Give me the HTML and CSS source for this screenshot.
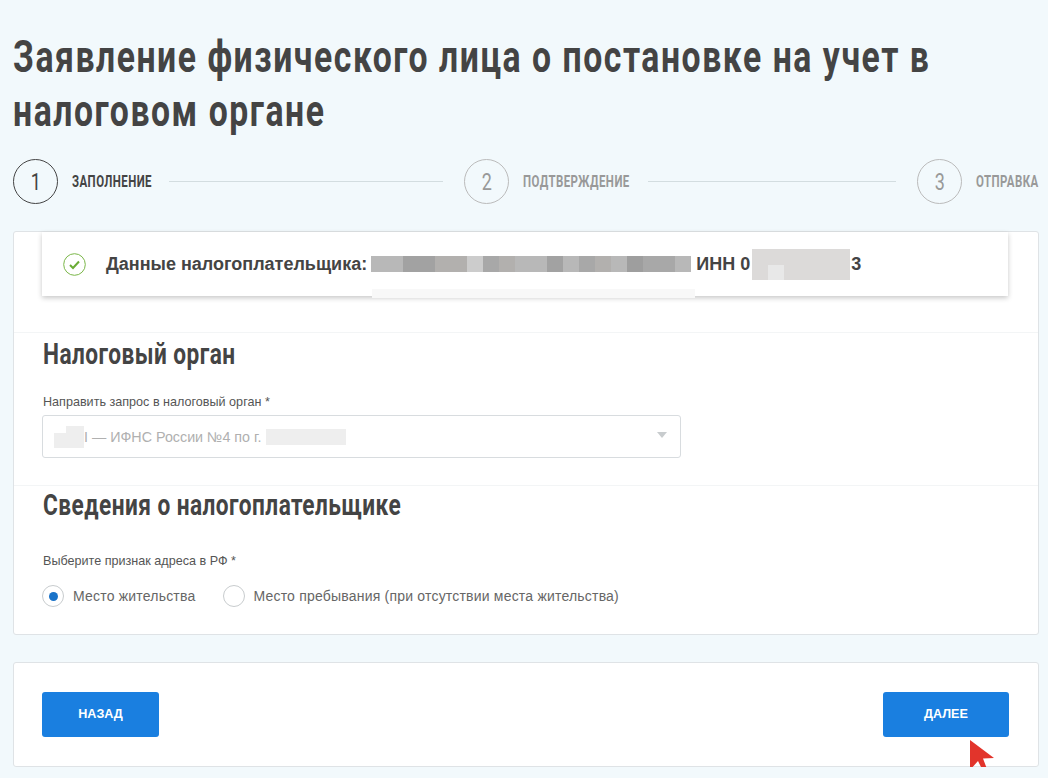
FILE: index.html
```html
<!DOCTYPE html>
<html lang="ru">
<head>
    <meta charset="UTF-8">
    <meta name="viewport" content="width=device-width, initial-scale=1.0">
    <title>Заявление физического лица</title>
    <link rel="stylesheet" href="styles.css">
</head>
<body>
    <h1 class="page-title">Заявление физического лица о постановке на учет в<br>налоговом органе</h1>

    <div class="steps">
        <div class="step step-active step-first">
            <span class="step-num"><span class="step-digit">1</span></span>
            <span class="step-name">Заполнение</span>
        </div>
        <div class="step-line step-line-long"></div>
        <div class="step step-second">
            <span class="step-num"><span class="step-digit">2</span></span>
            <span class="step-name">Подтверждение</span>
        </div>
        <div class="step-line"></div>
        <div class="step step-third">
            <span class="step-num"><span class="step-digit">3</span></span>
            <span class="step-name">Отправка</span>
        </div>
    </div>

    <div class="card form-card">
        <div class="payer">
            <svg class="payer-icon" width="23" height="23" viewBox="0 0 23 23" fill="none">
                <circle cx="11.500" cy="11.500" r="10.800" stroke="#7ab648" stroke-width="1"/>
                <path d="M7 12l3 3 6-6.500" stroke="#6aac35" stroke-width="2"/>
            </svg>
            <span class="payer-text">Данные налогоплательщика:</span>
            <span class="mosaic">
                <i class="c1"></i><i class="c1"></i><i class="c2"></i><i class="c2"></i><i class="c3"></i><i class="c3"></i><i class="c4"></i><i class="c5"></i><i class="c3"></i><i class="c1"></i><i class="c1"></i><i class="c2"></i><i class="c1"></i><i class="c5"></i><i class="c3"></i><i class="c1"></i><i class="c6"></i><i class="c5"></i><i class="c5"></i><i class="c1"></i>
            </span>
            <span class="payer-text">ИНН 0</span>
            <span class="mosaic-inn"></span>
            <span class="payer-text">3</span>
            <span class="payer-smear"></span>
        </div>

        <section class="block block-tax">
            <h2 class="block-title">Налоговый орган</h2>
            <div class="field-label">Направить запрос в налоговый орган *</div>
            <div class="select">
                <span class="blur-code"></span>
                <span class="select-text">I — ИФНС России №4 по г.</span>
                <span class="blur-city"></span>
                <span class="select-arrow"></span>
            </div>
        </section>

        <section class="block block-info">
            <h2 class="block-title">Сведения о налогоплательщике</h2>
            <div class="field-label">Выберите признак адреса в РФ *</div>
            <div class="radios">
                <label class="radio radio-on"><span class="radio-dot"></span>Место жительства</label>
                <label class="radio"><span class="radio-dot"></span>Место пребывания (при отсутствии места жительства)</label>
            </div>
        </section>
    </div>

    <div class="card actions">
        <button type="button" class="btn btn-back">Назад</button>
        <button type="button" class="btn btn-next">Далее</button>
        <svg class="cursor" width="27" height="34" viewBox="0 0 27 34">
            <path d="M1 1L25 19L14 19.500L18 30L14 32L9 22L1 31Z" fill="#e2342b"/>
        </svg>
    </div>
</body>
</html>
```

FILE: styles.css
```css
body {
    margin: 0;
    padding: 0 9px 0 13px;
    background-color: #f2f9fc;
    color: #444;
    font-family: "Liberation Sans", Arial, sans-serif;
    overflow-x: hidden;
}
.page-title {
    margin: 0;
    padding-top: 30px;
    font-family: Roboto, sans-serif;
    font-size: 44px;
    line-height: 54px;
    font-weight: bold;
    letter-spacing: 2px;
    white-space: nowrap;
    color: #444;
    transform: scaleX(0.767);
    transform-origin: left top;
}
.steps {
    display: flex;
    align-items: center;
    margin-top: 21px;
    height: 45px;
}
.step {
    display: flex;
    flex: none;
    align-items: center;
}
.step-first { width: 138px; }
.step-second { width: 166px; }
.step-third { width: 122px; }
.step-num {
    flex: none;
    width: 43px;
    height: 43px;
    border: 1px solid #bbb;
    border-radius: 50%;
    display: flex;
    align-items: center;
    justify-content: center;
    color: #999;
}
.step-digit {
    font-family: Roboto, sans-serif;
    font-size: 24px;
    transform: scaleX(0.75);
}
.step-name {
    flex: none;
    margin-left: 14px;
    font-family: Roboto, sans-serif;
    font-size: 16px;
    font-weight: bold;
    text-transform: uppercase;
    letter-spacing: 0.6px;
    color: #999;
    transform: scaleX(0.715);
    transform-origin: left center;
}
.step-third .step-name {
    margin-left: auto;
    transform-origin: right center;
}
.step-third .step-num {
    margin-right: -30px;
}
.step-active .step-num {
    border-color: #444;
    color: #444;
}
.step-active .step-name {
    color: #444;
}
.step-line {
    flex: 1;
    height: 1px;
    background-color: #d3dde0;
    margin: 0 21px 0 18px;
}
.step-line-long {
    flex: none;
    width: 274px;
}
.card {
    background-color: #fff;
    border: 1px solid #dfe3e6;
    border-radius: 3px;
    position: relative;
}
.form-card {
    margin-top: 27px;
    height: 402px;
}
.payer {
    position: relative;
    display: flex;
    align-items: center;
    height: 64px;
    margin: 0 30px 0 28px;
    padding-left: 21px;
    box-shadow: 0 2px 5px rgba(0, 0, 0, 0.22);
    background-color: #fff;
}
.payer-icon {
    margin-right: 20px;
}
.payer-text {
    font-size: 18px;
    font-weight: bold;
    color: #444;
    white-space: nowrap;
}
.mosaic {
    display: flex;
    margin-left: 4px;
    margin-right: 5px;
}
.mosaic i {
    display: block;
    width: 16px;
    height: 16px;
}
.c1 { background-color: #b8b8b8; }
.c2 { background-color: #a2a2a2; }
.c3 { background-color: #b2b0ae; }
.c4 { background-color: #cccccc; }
.c5 { background-color: #a8a8a8; }
.c6 { background-color: #9e9e9e; }
.mosaic-inn {
    flex: none;
    width: 98px;
    height: 31px;
    margin-left: 2px;
    margin-right: 1px;
    background: linear-gradient(#e8e8e8, #e8e8e8) 16px 16px / 16px 15px no-repeat #dcdad9;
}
.payer-smear {
    position: absolute;
    left: 330px;
    bottom: -2px;
    width: 323px;
    height: 9px;
    background-color: #f8f8f8;
}
.block {
    border-top: 1px solid #f3f5f6;
    padding: 0 28px;
}
.block-tax {
    margin-top: 36px;
    height: 152px;
}
.block-title {
    margin: 0 0 0 1px;
    font-family: Roboto, sans-serif;
    font-size: 30px;
    line-height: 42px;
    font-weight: bold;
    letter-spacing: 0.6px;
    white-space: nowrap;
    color: #444;
    transform: scaleX(0.755);
    transform-origin: left center;
}
.field-label {
    margin: 19px 0 0 1px;
    font-size: 12.600px;
    line-height: 16px;
    color: #555;
}
.select {
    display: flex;
    align-items: center;
    box-sizing: border-box;
    width: 639px;
    height: 43px;
    margin-top: 5px;
    padding-left: 11px;
    border: 1px solid #d8dcdf;
    border-radius: 3px;
    font-size: 14.300px;
    color: #b0b0b0;
    position: relative;
}
.blur-code {
    display: block;
    width: 30px;
    height: 22px;
    background: linear-gradient(#fff, #fff) 0 0 / 12px 7px no-repeat #eeeeee;
}
.blur-city {
    display: block;
    width: 80px;
    height: 16px;
    margin-left: 5px;
    background-color: #eeeeee;
}
.select-arrow {
    position: absolute;
    right: 13px;
    top: 16px;
    border: 5px solid transparent;
    border-top: 6px solid #c8ccce;
    border-bottom: 0;
}
.block-info .block-title {
    margin-top: -2px;
}
.block-info .field-label {
    margin-top: 27px;
}
.radios {
    display: flex;
    margin-top: 16px;
}
.radio {
    display: flex;
    align-items: center;
    font-size: 14px;
    color: #666;
    letter-spacing: 0.2px;
    margin-right: 28px;
}
.radio-dot {
    box-sizing: border-box;
    width: 22px;
    height: 22px;
    border: 1px solid #c8ccce;
    border-radius: 50%;
    margin-right: 8px;
    display: flex;
    align-items: center;
    justify-content: center;
}
.radio-on .radio-dot {
    margin-right: 9px;
}
.radio-on .radio-dot::after {
    content: "";
    width: 9px;
    height: 9px;
    border-radius: 50%;
    background-color: #1a73c9;
}
.actions {
    margin-top: 27px;
    height: 105px;
    box-sizing: border-box;
    display: flex;
    justify-content: space-between;
    align-items: center;
    padding: 0 29px 1px 28px;
}
.btn {
    height: 45px;
    border: none;
    border-radius: 3px;
    background-color: #1a7fe0;
    color: #fff;
    font-family: "Liberation Sans", Arial, sans-serif;
    font-size: 12.600px;
    font-weight: bold;
    text-transform: uppercase;
}
.btn-back {
    width: 117px;
}
.btn-next {
    width: 126px;
}
.cursor {
    position: absolute;
    left: 955px;
    top: 76px;
}
```
